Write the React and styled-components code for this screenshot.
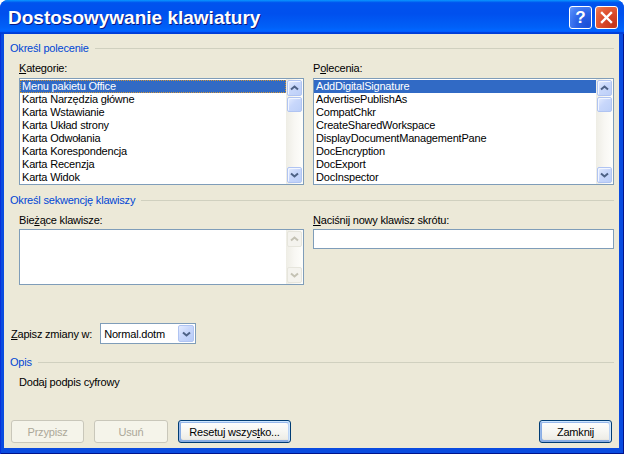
import React from 'react';
import styled, { createGlobalStyle, css } from 'styled-components';

const GlobalStyle = createGlobalStyle`
  html, body {
    margin: 0;
    padding: 0;
    background: #ffffff;
  }
  body {
    font-family: "Liberation Sans", Arial, sans-serif;
    font-size: 11px;
    letter-spacing: -0.2px;
    color: #000;
  }
  * { box-sizing: border-box; }
`;

const Window = styled.div`
  width: 624px;
  height: 454px;
  display: flex;
  flex-direction: column;
  border-radius: 8px 8px 0 0;
  overflow: hidden;
  background: #0a4be0;
`;

const TitleBar = styled.div`
  height: 34px;
  flex-shrink: 0;
  display: flex;
  align-items: center;
  padding: 1px 6px 0 8px;
  background: linear-gradient(180deg, #0997ff 0%, #0053ee 8%, #0050ee 40%, #0060f8 80%, #0066ff 88%, #005bff 93%, #003dd7 96%, #003dd7 100%);
`;

const Title = styled.div`
  flex: 1;
  font-size: 19px;
  font-weight: bold;
  letter-spacing: 0;
  line-height: 34px;
  color: #fff;
  text-shadow: 1px 1px #0a1883;
  white-space: nowrap;
`;

const CaptionButton = styled.div`
  width: 23px;
  height: 23px;
  margin-left: 3px;
  border: 1px solid #fff;
  border-radius: 3px;
  display: flex;
  align-items: center;
  justify-content: center;
  color: #fff;
  font-weight: bold;
  font-size: 17px;
  letter-spacing: 0;
  ${(p) =>
    p.$close
      ? css`
          background: radial-gradient(circle at 85% 85%, #c4361a 0%, #d9482a 45%, #e9673f 80%, #f08a66 100%);
        `
      : css`
          background: radial-gradient(circle at 85% 85%, #1b4fd8 0%, #2a62e6 45%, #4a82f6 80%, #6a9cfb 100%);
        `}
`;

const Frame = styled.div`
  flex: 1;
  display: flex;
  padding: 0 5px 6px 4px;
  background: #0a4be0;
  box-shadow: inset 1px 0 #0831d9, inset -1px -1px #00138c;
`;

const Client = styled.div`
  flex: 1;
  display: flex;
  flex-direction: column;
  background: #ece9d8;
  padding: 8px 5px 5px 6px;
`;

const GroupHeader = styled.div`
  display: flex;
  align-items: center;
  gap: 6px;
  height: 13px;
  line-height: 13px;
  color: #0046d5;
  margin-top: ${(p) => p.$top || 0}px;
  &::after {
    content: '';
    flex: 1;
    height: 1px;
    background: #d0d0bf;
  }
`;

const Columns = styled.div`
  display: grid;
  grid-template-columns: 285px 1fr;
  column-gap: 9px;
  padding-left: 9px;
`;

const Field = styled.div`
  display: flex;
  flex-direction: column;
`;

const Label = styled.div`
  height: 13px;
  line-height: 13px;
  margin-top: 7px;
  margin-bottom: ${(p) => p.$gap ?? 3}px;
  white-space: nowrap;
`;

const Key = styled.span`
  text-decoration: underline;
`;

const ListBox = styled.div`
  height: ${(p) => p.$height}px;
  display: flex;
  background: #fff;
  border: 1px solid #7f9db9;
`;

const Items = styled.div`
  flex: 1;
  padding-top: 1px;
  overflow: hidden;
`;

const Item = styled.div`
  height: 13px;
  line-height: 13px;
  padding-left: 2px;
  white-space: nowrap;
  ${(p) =>
    p.$selected &&
    css`
      background: #316ac5;
      color: #fff;
    `}
  ${(p) =>
    p.$focused &&
    css`
      outline: 1px dotted #ce953a;
      outline-offset: -1px;
    `}
`;

const ScrollTrack = styled.div`
  width: 17px;
  display: flex;
  flex-direction: column;
  padding: 1px;
  background: linear-gradient(90deg, #eeede5 0%, #f8f7f3 50%, #fefefb 100%);
`;

const ScrollButton = styled.div`
  height: 16px;
  border-radius: 2px;
  display: flex;
  align-items: center;
  justify-content: center;
  margin-bottom: ${(p) => (p.$thumb ? 0 : 1)}px;
  ${(p) =>
    p.$disabled
      ? css`
          background: #f4f3ee;
          border: 1px solid #e6e5dc;
        `
      : css`
          background: linear-gradient(135deg, #e4ecfe 0%, #c8d7fb 45%, #bccff8 100%);
          border: 1px solid #b0c4f2;
          box-shadow: inset 1px 1px #f2f6ff;
        `}
  ${(p) => p.$thumb && css`height: 15px;`}
`;

const Spacer = styled.div`
  flex: 1;
`;

const Chevron = ({ down, disabled }) => (
  <svg width="9" height="6" viewBox="0 0 9 6">
    <polyline
      points={down ? '1,1.5 4.5,4.5 8,1.5' : '1,4.5 4.5,1.5 8,4.5'}
      fill="none"
      stroke={disabled ? '#c4c2b4' : '#4d6185'}
      strokeWidth="2"
    />
  </svg>
);

const ScrollBar = ({ disabled, thumb }) => (
  <ScrollTrack>
    <ScrollButton $disabled={disabled}>
      <Chevron disabled={disabled} />
    </ScrollButton>
    {thumb && <ScrollButton $thumb />}
    <Spacer />
    <ScrollButton $disabled={disabled} style={{ marginBottom: 0 }}>
      <Chevron down disabled={disabled} />
    </ScrollButton>
  </ScrollTrack>
);

const TextInput = styled.div`
  height: 20px;
  background: #fff;
  border: 1px solid #7f9db9;
`;

const SaveRow = styled.div`
  display: flex;
  align-items: center;
  gap: 8px;
  margin-top: 38px;
  padding-left: 1px;
`;

const Select = styled.div`
  width: 96px;
  height: 21px;
  display: flex;
  align-items: center;
  background: #fff;
  border: 1px solid #7f9db9;
  padding: 1px;
`;

const SelectValue = styled.div`
  flex: 1;
  padding-left: 2px;
  white-space: nowrap;
`;

const DropButton = styled.div`
  width: 16px;
  height: 17px;
  border-radius: 2px;
  display: flex;
  align-items: center;
  justify-content: center;
  background: linear-gradient(135deg, #e4ecfe 0%, #c8d7fb 45%, #b7cbf7 100%);
  border: 1px solid #b0c4f2;
`;

const Description = styled.div`
  height: 13px;
  line-height: 13px;
  margin-top: 7px;
  padding-left: 9px;
`;

const Footer = styled.div`
  margin-top: auto;
  display: flex;
  gap: 10px;
  padding: 0 2px 0 1px;
`;

const Button = styled.button`
  width: ${(p) => p.$w}px;
  height: 23px;
  padding: 0;
  font: inherit;
  letter-spacing: inherit;
  border-radius: 3px;
  border: 1px solid #003c74;
  color: #000;
  background: linear-gradient(180deg, #ffffff 0%, #f6f6f2 50%, #eeede7 85%, #d8d3c8 100%);
  box-shadow: inset -1px -1px #d6d0c5, inset 1px 1px #fff;
  ${(p) => p.$right && css`margin-left: auto;`}
  ${(p) =>
    p.$default &&
    css`
      box-shadow: inset -1px 1px #cee7ff, inset 1px 2px #98b8ea, inset -2px 2px #bcd4f6,
        inset 1px -1px #89ade4, inset 2px -2px #89ade4;
    `}
  &:disabled {
    border-color: #c9c7ba;
    color: #aca899;
    background: #f5f4ea;
    box-shadow: none;
  }
`;

const categories = [
  'Menu pakietu Office',
  'Karta Narzędzia główne',
  'Karta Wstawianie',
  'Karta Układ strony',
  'Karta Odwołania',
  'Karta Korespondencja',
  'Karta Recenzja',
  'Karta Widok',
];

const commands = [
  'AddDigitalSignature',
  'AdvertisePublishAs',
  'CompatChkr',
  'CreateSharedWorkspace',
  'DisplayDocumentManagementPane',
  'DocEncryption',
  'DocExport',
  'DocInspector',
];

const App = () => (
  <>
    <GlobalStyle />
    <Window>
      <TitleBar>
        <Title>Dostosowywanie klawiatury</Title>
        <CaptionButton>?</CaptionButton>
        <CaptionButton $close>
          <svg width="13" height="13" viewBox="0 0 13 13">
            <path d="M2 2 L11 11 M11 2 L2 11" stroke="#fff" strokeWidth="2.4" strokeLinecap="square" />
          </svg>
        </CaptionButton>
      </TitleBar>
      <Frame>
        <Client>
          <GroupHeader>Określ polecenie</GroupHeader>
          <Columns>
            <Field>
              <Label>
                <Key>K</Key>ategorie:
              </Label>
              <ListBox $height={107}>
                <Items>
                  {categories.map((c, i) => (
                    <Item key={c} $selected={i === 0} $focused={i === 0}>
                      {c}
                    </Item>
                  ))}
                </Items>
                <ScrollBar thumb />
              </ListBox>
            </Field>
            <Field>
              <Label>
                P<Key>o</Key>lecenia:
              </Label>
              <ListBox $height={107}>
                <Items>
                  {commands.map((c, i) => (
                    <Item key={c} $selected={i === 0}>
                      {c}
                    </Item>
                  ))}
                </Items>
                <ScrollBar thumb />
              </ListBox>
            </Field>
          </Columns>

          <GroupHeader $top={9}>Określ sekwencję klawiszy</GroupHeader>
          <Columns>
            <Field>
              <Label $gap={2}>
                Bie<Key>ż</Key>ące klawisze:
              </Label>
              <ListBox $height={56}>
                <Items />
                <ScrollBar disabled />
              </ListBox>
            </Field>
            <Field>
              <Label $gap={2}>
                <Key>N</Key>aciśnij nowy klawisz skrótu:
              </Label>
              <TextInput />
            </Field>
          </Columns>

          <SaveRow>
            <span>
              <Key>Z</Key>apisz zmiany w:
            </span>
            <Select>
              <SelectValue>Normal.dotm</SelectValue>
              <DropButton>
                <Chevron down />
              </DropButton>
            </Select>
          </SaveRow>

          <GroupHeader $top={12}>Opis</GroupHeader>
          <Description>Dodaj podpis cyfrowy</Description>

          <Footer>
            <Button $w={73} disabled>
              Przypisz
            </Button>
            <Button $w={74} disabled>
              Usuń
            </Button>
            <Button $w={113} $default>
              Resetuj wszys<Key>t</Key>ko...
            </Button>
            <Button $w={73} $right $default>
              Zamknij
            </Button>
          </Footer>
        </Client>
      </Frame>
    </Window>
  </>
);

export default App;
